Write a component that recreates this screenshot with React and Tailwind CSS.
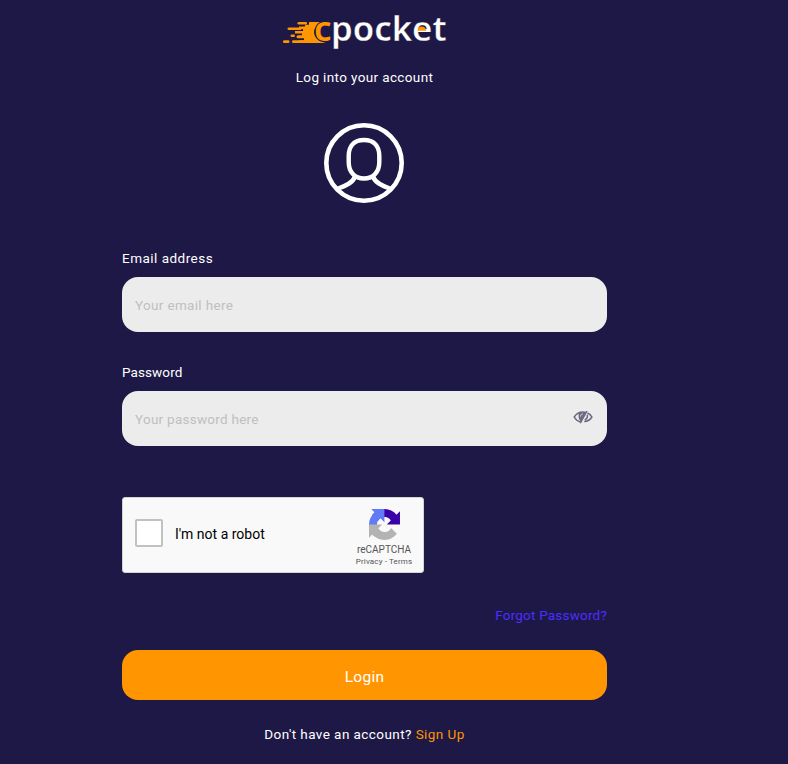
import React from "react";

function Logo() {
  return (
    <svg className="block overflow-visible" width="168" height="48" viewBox="280 6 168 48" aria-label="cpocket">
      <g fill="#ff9500">
        <path d="M309 22h19c-9 1-14 5-14 10s4 9.500 12 11h-27v-2.800h5v-2h-6a1.400 1.400 0 0 1 0-3h4v-1.800h-7v-2.400h8v-2h-4v-2.600h6v-1.600h4z" />
        <rect x="297.500" y="22" width="9.500" height="2.600" rx="1.300" />
        <rect x="287.500" y="27.500" width="14" height="2.600" rx="1.300" />
        <rect x="290.500" y="34.500" width="4.500" height="2.600" rx="1.300" />
        <rect x="283" y="40.300" width="6.500" height="2.700" rx="1.300" />
        <rect x="292" y="40.300" width="14" height="2.700" rx="1.300" />
      </g>
      <text x="314" y="41" textLength="17.500" lengthAdjust="spacingAndGlyphs" fontSize="34" fontWeight="600" fill="#ff9500" stroke="#1e1846" strokeWidth="2" paintOrder="stroke" fontFamily="Noto Sans, sans-serif">c</text>
      <text x="331" y="41" textLength="115.500" lengthAdjust="spacingAndGlyphs" fontSize="33.500" fontWeight="600" fill="#fff" stroke="#1e1846" strokeWidth="0.300" fontFamily="Noto Sans, sans-serif">pocket</text>
      <path d="M417.500 30.700c0-5.600 8.500-5.600 8.500 0z" fill="#ff9500" />
    </svg>
  );
}

function Avatar() {
  return (
    <svg className="block" width="80" height="80" viewBox="0 0 80 80" fill="none" stroke="#fff">
      <circle cx="40" cy="40" r="37.700" strokeWidth="4.600" />
      <path d="M40 17c-10 0-15.300 6-15.300 16v6c0 10 6 16.500 15.300 16.500S55.300 49 55.300 39v-6c0-10-5.300-16-15.300-16z" strokeWidth="4.400" />
      <path d="M31 53.500c-2 6-8 9-18 12.500M49 53.500c2 6 8 9 18 12.500" strokeWidth="4.400" />
    </svg>
  );
}

function EyeOff() {
  return (
    <svg className="block" width="20" height="16" viewBox="0 0 20 16" fill="none" stroke="#6b6880" strokeWidth="1.500">
      <path d="M7.500 13C5 12.300 2.500 10.500 1.200 8 3.500 4.500 6.500 3 10 3c1 0 2 .1 2.800.4M14.500 4C16.500 4.900 18 6.300 18.900 8c-1.700 2.800-4.300 4.300-7.700 4.600" />
      <path d="M6 4l7-1L7.800 12.500C5.500 10.500 5 7 6 4z" fill="#6b6880" stroke="none" />
      <path d="M14 2L7.300 14.200M14.300 5.700c.5 2.300-.5 4.300-2.500 5.200" />
      <path d="M7.500 7.500c0-1.500 1-2.500 2.200-2.600" stroke="#ececec" strokeWidth="1" />
    </svg>
  );
}

function RecaptchaLogo() {
  return (
    <svg className="block" width="31" height="31" viewBox="0 0 64 64">
      <path fill="#3a00a8" d="M64 31.955a33 33 0 0 0-.033-1.370V4.687l-7.160 7.160C50.948 4.674 42.033.093 32.050.093c-10.390 0-19.622 4.960-25.460 12.641l11.736 11.860a15.550 15.550 0 0 1 4.754-5.334c2.050-1.600 4.952-2.906 8.968-2.906.485 0 .86.057 1.135.163 4.976.393 9.288 3.140 11.828 7.124l-8.307 8.307L64 31.953" />
      <path fill="#617af5" d="M31.862.094a33 33 0 0 0-1.370.033H4.594l7.160 7.160C4.580 13.147 0 22.062 0 32.046c0 10.390 4.960 19.622 12.641 25.460L24.500 45.770a15.550 15.550 0 0 1-5.334-4.754c-1.600-2.050-2.906-4.952-2.906-8.968 0-.485.057-.86.163-1.135.393-4.976 3.140-9.288 7.124-11.828l8.307 8.307L31.860.095" />
      <path fill="#b3b3b3" d="M.001 32.045a33 33 0 0 0 .033 1.370v25.898l7.160-7.160c5.860 7.173 14.774 11.754 24.758 11.754 10.390 0 19.622-4.960 25.460-12.641L45.676 39.406a15.550 15.550 0 0 1-4.754 5.334c-2.050 1.600-4.952 2.906-8.968 2.906-.485 0-.86-.057-1.135-.163-4.976-.393-9.288-3.140-11.828-7.124l8.307-8.307c-10.522.041-22.400.066-27.295-.005" />
    </svg>
  );
}

function Field({ label, placeholder, type, tracking, placeholderTracking, children }) {
  return (
    <div>
      <label className={`block h-5 text-[13.5px] leading-[21px] ${tracking}`}>{label}</label>
      <div className="mt-[9px] flex h-[55px] items-center rounded-[16px] bg-[#ececec] pl-[13px] pr-[14px]">
        <input type={type} placeholder={placeholder} className={`h-full min-w-0 flex-1 bg-transparent text-[13.5px] outline-none placeholder:text-[#bfbfbf] ${placeholderTracking}`} />
        {children}
      </div>
    </div>
  );
}

export default function App() {
  return (
    <main className="h-[764px] w-full overflow-hidden bg-[#1e1846] font-['Roboto',sans-serif] text-[13.5px] text-white">
      <div className="ml-[122px] flex w-[485px] flex-col pt-1.5">
        <div className="flex justify-center pr-px"><Logo /></div>
        <p className="mt-[13px] h-5 text-center leading-[21px] tracking-[0.37px]">Log into your account</p>
        <div className="mt-9 flex justify-center pr-px"><Avatar /></div>
        <div className="mt-[45px]">
          <Field label="Email address" placeholder="Your email here" type="email" tracking="tracking-[0.48px]" placeholderTracking="tracking-[0.33px]" />
        </div>
        <div className="mt-[30px]">
          <Field label="Password" placeholder="Your password here" type="password" tracking="tracking-[0.1px]" placeholderTracking="tracking-[0.26px]">
            <button type="button" aria-label="Show password" className="mb-[3px]"><EyeOff /></button>
          </Field>
        </div>
        <div className="mt-[51px] flex h-[76px] w-[302px] items-center rounded-[3px] border border-[#d3d3d3] bg-[#f9f9f9]">
          <div className="mb-1 ml-3 h-7 w-7 rounded-[2px] border-2 border-[#c1c1c1] bg-white" />
          <span className="mb-0.5 ml-3 flex-1 text-sm text-black">I'm not a robot</span>
          <div className="mb-px mr-2.5 mt-[7px] flex w-[58px] flex-col items-center text-[#555]">
            <RecaptchaLogo />
            <span className="mt-1 text-[10px] leading-3">reCAPTCHA</span>
            <span className="whitespace-nowrap text-[8px] leading-3 tracking-[0.14px]">Privacy - Terms</span>
          </div>
        </div>
        <a className="mt-8 h-5 text-right leading-[21px] tracking-[0.2px] text-[#4b2eff]">Forgot Password?</a>
        <button type="button" className="mt-[25px] h-[50px] rounded-[16px] bg-[#ff9500] pt-1.5 text-[15.5px] tracking-[0.3px]">Login</button>
        <p className="mt-6 h-5 text-center leading-5 tracking-[0.43px]">Don't have an account? <a className="text-[#ff9500]">Sign Up</a></p>
      </div>
    </main>
  );
}
